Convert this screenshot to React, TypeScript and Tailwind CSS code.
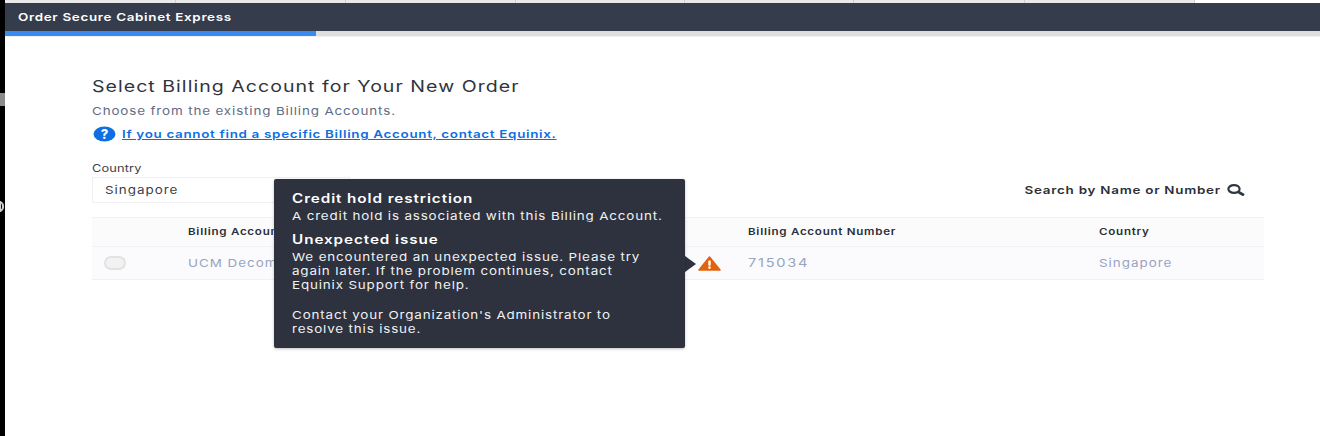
const sans = "font-['Inter',sans-serif]";
// the screenshot is stretched sideways, so the text is too
const wide = "inline-block origin-left scale-x-[1.22] whitespace-nowrap";

function Warning() {
  return (
    <svg width="23" height="15" viewBox="0 0 23 15">
      <path d="M11.5 1 L22 14 H1 Z" fill="#e0640f" stroke="#e0640f" strokeWidth="1.5" strokeLinejoin="round" />
      <rect x="10.3" y="4.5" width="2.4" height="5.2" rx="0.8" fill="#fff" />
      <circle cx="11.5" cy="11.6" r="1.3" fill="#fff" />
    </svg>
  );
}

function HelpIcon() {
  return (
    <svg width="23" height="16" viewBox="0 0 23 16">
      <ellipse cx="11.5" cy="8" rx="11" ry="7.6" fill="#0f6fe0" />
      <text x="11.5" y="12.5" textAnchor="middle" fontSize="13" fontWeight="800" fill="#fff" fontFamily="Inter, sans-serif">?</text>
    </svg>
  );
}

function SearchIcon() {
  return (
    <svg width="18" height="12" viewBox="0 0 18 12" fill="none" stroke="#2f3644" strokeWidth="2.2">
      <ellipse cx="7" cy="5" rx="5.6" ry="3.9" />
      <path d="M11.4 8 L17 11.2" strokeWidth="2.8" />
    </svg>
  );
}

export default function App() {
  return (
    <div className={`${sans} flex h-[436px] w-[1320px] overflow-hidden bg-white`}>
      {/* black strip on the left */}
      <div className="flex w-[5px] shrink-0 flex-col bg-black">
        <div className="mt-[93px] h-[13px] bg-[#8c8c8c]" />
        <div className="mt-[95px] ml-[-1px] h-[11px] w-[5px] rounded-r-full border-2 border-[#cfcfcf]" />
      </div>

      <div className="relative flex min-w-0 flex-1 flex-col">
        {/* cut off tabs on top */}
        <div className="flex h-[3px] bg-[#e9e9e9]">
          <div className="w-[171px] border-r border-[#cfcfcf]" />
          <div className="w-[170px] border-r border-[#cfcfcf]" />
          <div className="w-[170px] border-r border-[#cfcfcf]" />
          <div className="w-[169px] border-r border-[#cfcfcf]" />
          <div className="w-[169px] border-r border-[#cfcfcf]" />
          <div className="w-[171px] border-r border-[#cfcfcf]" />
          <div className="w-[170px] border-r border-[#cfcfcf]" />
          <div className="flex-1 bg-white" />
        </div>

        <div className="flex h-[28px] items-center bg-[#353c4c] pl-[13px] text-[11px] font-semibold tracking-[0.55px] text-white">
          <span className={wide}>Order Secure Cabinet Express</span>
        </div>

        <div className="h-[6px] border-b border-[#f0f0f0] bg-[#dedede]">
          <div className="h-[5px] w-[311px] bg-[#3b8af0]" />
        </div>

        <div className="flex flex-col pl-[87px] pr-[56px]">
          <h1 className="mt-[38px] text-[16px] leading-[22px] tracking-[0.85px] text-[#30343c]">
            <span className={wide}>Select Billing Account for Your New Order</span>
          </h1>
          <p className="mt-[6px] text-[11px] leading-[16px] tracking-[0.7px] text-[#5f6c85]">
            <span className={wide}>Choose from the existing Billing Accounts.</span>
          </p>
          <div className="mt-[7px] flex items-center gap-[6px] pl-px">
            <HelpIcon />
            <a className="text-[11px] font-semibold leading-[16px] tracking-[0.55px] text-[#0f6fe0]">
              <span className={`${wide} underline`}>If you cannot find a specific Billing Account, contact Equinix.</span>
            </a>
          </div>

          <label className="mt-[20px] text-[10.5px] leading-[14px] tracking-[0.1px] text-[#3a3f4a]">
            <span className={wide}>Country</span>
          </label>
          <div className="mt-[1px] flex items-center justify-between">
            <div className="flex h-[26px] w-[258px] items-center border border-[#f0f0f2] pl-[12px] text-[11px] tracking-[0.8px] text-[#3a3f4a]">
              <span className={wide}>Singapore</span>
            </div>
            <div className="mr-[19px] flex items-center gap-[6px] text-[11px] font-semibold tracking-[0.6px] text-[#2b2f38]">
              <span className="inline-block origin-right scale-x-[1.22] whitespace-nowrap">Search by Name or Number</span>
              <SearchIcon />
            </div>
          </div>

          <div className="mt-[14px] grid h-[30px] grid-cols-[96px_560px_351px_1fr] items-center border-y border-[#f2f2f4] bg-[#fbfbfc] text-[9.5px] font-semibold tracking-[0.6px] text-[#2b2f38]">
            <div />
            <div><span className={wide}>Billing Accoun</span></div>
            <div><span className={wide}>Billing Account Number</span></div>
            <div><span className={wide}>Country</span></div>
          </div>
          <div className="grid h-[33px] grid-cols-[96px_560px_351px_1fr] items-center border-b border-[#f0f0f3] bg-[#fbfbfd] text-[11px] tracking-[0.8px] text-[#98a4c0]">
            <div className="pl-[12px]">
              <div className="h-[14px] w-[22px] rounded-full border-2 border-[#e2e2e2] bg-[#f2f2f2]" />
            </div>
            <div><span className={wide}>UCM Decom</span></div>
            <div className="text-[12px] tracking-[1.4px]"><span className={wide}>715034</span></div>
            <div><span className={wide}>Singapore</span></div>
          </div>
        </div>

        {/* warning marker with its tooltip */}
        <div className="absolute left-[693px] top-[256px] leading-none">
          <Warning />
        </div>
        <div className="absolute left-[680px] top-[256px] h-0 w-0 border-y-[8px] border-l-[11px] border-y-transparent border-l-[#2d323e]" />
        <div className="absolute left-[269px] top-[179px] h-[169px] w-[411px] rounded-[2px] bg-[#2d323e] pl-[18px] pt-[12px] text-[11px] leading-[14px] tracking-[0.68px] text-[#f0f1f3] shadow-[0_1px_3px_rgba(0,0,0,0.25)]">
          <div className="text-[12.5px] font-semibold leading-[15px] tracking-[0.75px] text-white">
            <span className={wide}>Credit hold restriction</span>
          </div>
          <div className="mt-[3px]">
            <span className={wide}>A credit hold is associated with this Billing Account.</span>
          </div>
          <div className="mt-[9px] text-[12.5px] font-semibold leading-[15px] tracking-[0.75px] text-white">
            <span className={wide}>Unexpected issue</span>
          </div>
          <div className="mt-[3px] w-[300px] origin-left scale-x-[1.22]">
            We encountered an unexpected issue. Please try again later. If the problem continues, contact Equinix Support for help.
          </div>
          <div className="mt-[16px] w-[300px] origin-left scale-x-[1.22]">
            Contact your Organization's Administrator to resolve this issue.
          </div>
        </div>
      </div>
    </div>
  );
}
